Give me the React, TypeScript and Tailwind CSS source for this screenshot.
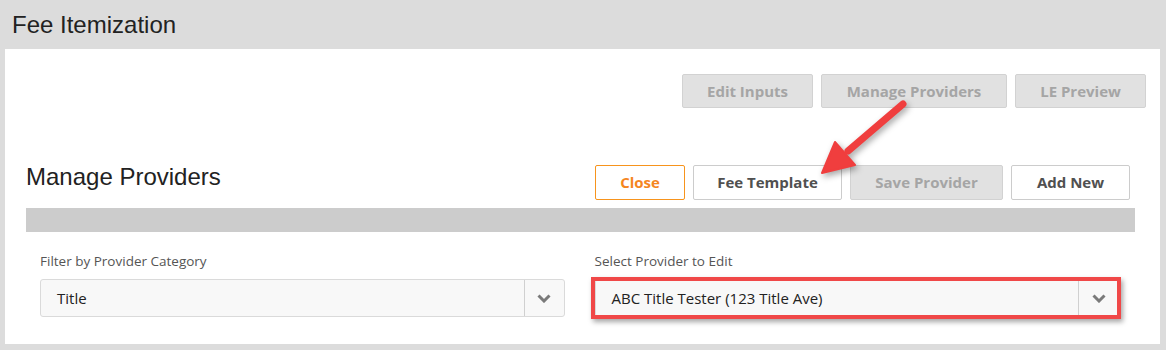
import React from 'react';

const grayBtn =
  'h-[34px] flex items-center justify-center rounded-[2px] border border-[#d2d2d2] bg-[#e1e1e1] text-[15px] font-bold text-[#a5a5a5]';

const Chevron: React.FC = () => (
  <svg width="14" height="9" viewBox="0 0 14 9">
    <polyline points="1.5,1.5 7,7 12.5,1.5" fill="none" stroke="#7a7a7a" strokeWidth="3" />
  </svg>
);

const SelectBox: React.FC<{ value: string }> = ({ value }) => (
  <div className="h-[38px] flex rounded-[3px] border border-[#dadada] bg-[#f8f8f8]">
    <div className="flex-1 flex items-center pl-[16px] text-[15px] text-[#222]">{value}</div>
    <div className="w-[40px] flex items-center justify-center border-l border-[#d0d0d0]">
      <Chevron />
    </div>
  </div>
);

export default function App() {
  return (
    <div
      className="relative w-[1166px] h-[350px] bg-[#dcdcdc] pl-[5px] pr-[6px] pb-[6px] flex flex-col"
      style={{ fontFamily: '"Open Sans", sans-serif' }}
    >
      <div
        className="h-[49px] pl-[7px] flex items-center text-[24px] text-[#222]"
        style={{ fontFamily: '"Liberation Sans", Arial, sans-serif' }}
      >
        Fee Itemization
      </div>

      <div className="flex-1 bg-white pl-[21px] pr-[14px] pt-[25px]">
        {/* top tool buttons */}
        <div className="flex justify-end gap-[8px]">
          <div className={`${grayBtn} w-[131px]`}>Edit Inputs</div>
          <div className={`${grayBtn} w-[186px]`}>Manage Providers</div>
          <div className={`${grayBtn} w-[131px]`}>LE Preview</div>
        </div>

        <div className="mr-[11px] mt-[57px]">
          <div className="flex items-start justify-between">
            <h2
              className="text-[24px] leading-none text-[#222]"
              style={{ fontFamily: '"Liberation Sans", Arial, sans-serif' }}
            >
              Manage Providers
            </h2>
            <div className="flex gap-[8px] pr-[5px]">
              <div className="w-[90px] h-[35px] flex items-center justify-center rounded-[2px] border border-[#f7941d] bg-white text-[15px] font-bold text-[#f5861f]">
                Close
              </div>
              <div className="w-[149px] h-[35px] flex items-center justify-center rounded-[2px] border border-[#cccccc] bg-white text-[15px] font-bold text-[#505050]">
                Fee Template
              </div>
              <div className="w-[153px] h-[35px] flex items-center justify-center rounded-[2px] border border-[#d2d2d2] bg-[#e1e1e1] text-[15px] font-bold text-[#a5a5a5]">
                Save Provider
              </div>
              <div className="w-[119px] h-[35px] flex items-center justify-center rounded-[2px] border border-[#cccccc] bg-white text-[15px] font-bold text-[#505050]">
                Add New
              </div>
            </div>
          </div>

          <div className="mt-[8px] h-[24px] bg-[#cccccc]" />

          <div className="mt-[20px] grid grid-cols-2">
            <div className="pl-[14px] pr-[16px]">
              <div className="text-[13.5px] leading-[18px] text-[#555]">Filter by Provider Category</div>
              <div className="mt-[9px]">
                <SelectBox value="Title" />
              </div>
            </div>
            <div className="pl-[14px] pr-[16px]">
              <div className="text-[13.5px] leading-[18px] text-[#555]">Select Provider to Edit</div>
              <div className="relative mt-[9px]">
                <SelectBox value="ABC Title Tester (123 Title Ave)" />
                <div className="pointer-events-none absolute -left-[4px] -right-[2px] -top-[2px] -bottom-[2px] border-[4px] border-[#f04848] shadow-[2px_3px_5px_rgba(0,0,0,0.35)]" />
              </div>
            </div>
          </div>
        </div>
      </div>

      {/* annotation arrow */}
      <svg
        className="pointer-events-none absolute left-0 top-0"
        width="1166"
        height="350"
        viewBox="0 0 1166 350"
        style={{ filter: 'drop-shadow(2px 3px 3px rgba(0,0,0,0.35))' }}
      >
        <line x1="903" y1="104" x2="848" y2="151" stroke="#f03e3e" strokeWidth="7" strokeLinecap="round" />
        <polygon points="822,173 835,142 855,165" fill="#f03e3e" stroke="#f03e3e" strokeWidth="2" strokeLinejoin="round" />
      </svg>
    </div>
  );
}
